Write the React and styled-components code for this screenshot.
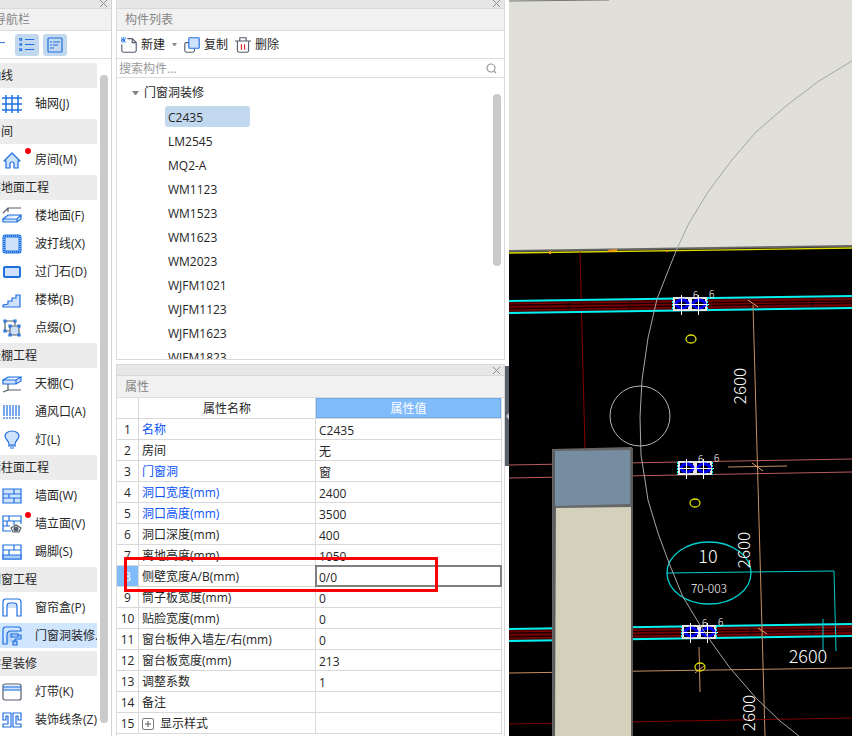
import React from "react";
import styled, { createGlobalStyle, css } from "styled-components";

const GlobalStyle = createGlobalStyle`
  * { box-sizing: border-box; }
  body {
    margin: 0;
    background: #fff;
    color: #262626;
    font: 12px/20px "Open Sans", "Noto Sans CJK SC", sans-serif;
  }
  button, input { font: inherit; color: inherit; padding: 0; border: 0; background: none; }
  button { cursor: pointer; }
  svg { display: block; flex: none; }
`;

const Workspace = styled.div`
  display: flex;
  height: 100vh;
  overflow: hidden;
`;

const NavPanel = styled.nav`
  flex: none;
  display: flex;
  flex-direction: column;
  align-items: stretch;
  width: 127px;
  margin-left: -15px;
  margin-right: 4px;
  border-right: 1px solid #d4d4d4;
  overflow: hidden;
`;

const Dock = styled.div`
  flex: none;
  display: flex;
  flex-direction: column;
  gap: 4px;
  width: 389px;
`;

const Panel = styled.section`
  display: flex;
  flex-direction: column;
  min-height: 0;
  flex: ${(p) => (p.$grow ? "1" : "0 0 360px")};
  border: 1px solid #d9d9d9;
  border-top-width: ${(p) => (p.$grow ? "1px" : "0")};
  border-bottom-width: ${(p) => (p.$grow ? "0" : "1px")};
  overflow: hidden;
`;

const Grip = styled.div`
  flex: none;
  display: flex;
  justify-content: flex-end;
  align-items: flex-end;
  height: ${(p) => (p.$tall ? "11px" : "9px")};
  padding-right: 3px;
  background: #e7e7e7;
  border-bottom: 1px solid #d9d9d9;
`;

const CloseButton = styled.button`
  display: flex;
  padding-bottom: 1px;
`;

const PanelTitle = styled.h2`
  flex: none;
  margin: 0;
  height: 22px;
  padding-left: ${(p) => p.$inset || "8px"};
  background: #f1f1f1;
  border-bottom: 1px solid #dcdcdc;
  color: #858585;
  font-size: 12px;
  font-weight: 400;
  line-height: 22px;
`;

const Toolbar = styled.div`
  flex: none;
  display: flex;
  align-items: center;
  height: 28px;
  padding-left: 4px;
  border-bottom: 1px solid #dcdcdc;
`;

const NavToolbar = styled(Toolbar)`
  gap: 4px;
  padding-left: 6px;
`;

const ToggleButton = styled.button`
  display: grid;
  place-items: center;
  width: ${(p) => (p.$on ? "24px" : "20px")};
  height: 22px;
  border-radius: 3px;
  background: ${(p) => (p.$on ? "#c2d8ef" : "transparent")};
`;

const ToolButton = styled.button`
  display: flex;
  align-items: center;
  gap: 4px;
  margin-right: 7px;
  padding-top: 1px;
  line-height: 20px;
`;

const NavBody = styled.div`
  flex: 1;
  display: flex;
  gap: 3px;
  min-height: 0;
  padding: 4px 3px 0 0;
  overflow: hidden;
`;

const NavList = styled.div`
  flex: 1;
  display: flex;
  flex-direction: column;
  gap: 3px;
  min-width: 0;
`;

const NavGroup = styled.h3`
  flex: none;
  margin: 0;
  height: 25px;
  padding-left: 4px;
  background: #ececec;
  font-size: 12px;
  font-weight: 400;
  line-height: 25px;
  white-space: nowrap;
`;

const NavItem = styled.button`
  flex: none;
  display: flex;
  align-items: center;
  gap: 13px;
  height: 25px;
  padding-left: 17px;
  background: ${(p) => (p.$active ? "#d0e5fe" : "transparent")};
  line-height: 25px;
  white-space: nowrap;
  overflow: hidden;
`;

const IconSlot = styled.span`
  position: relative;
  display: block;
`;

const NewDot = styled.i`
  position: absolute;
  top: -2px;
  right: -9px;
  width: 6px;
  height: 6px;
  border-radius: 50%;
  background: #f5000c;
`;

const ScrollTrack = styled.div`
  flex: none;
  width: 8px;
  margin: ${(p) => p.$margin};
`;

const ScrollThumb = styled.div`
  height: ${(p) => p.$length};
  border-radius: 4px;
  background: #cacaca;
`;

const SearchBar = styled.label`
  flex: none;
  display: flex;
  align-items: center;
  height: 19px;
  padding: 0 7px 0 2px;
  border-bottom: 1px solid #dcdcdc;
`;

const SearchInput = styled.input`
  flex: 1;
  min-width: 0;
  height: 18px;
  padding-top: 2px;
  outline: 0;
  &::placeholder { color: #9a9a9a; opacity: 1; }
`;

const TreeArea = styled.div`
  flex: 1;
  display: flex;
  min-height: 0;
  overflow: hidden;
`;

const Tree = styled.div`
  flex: 1;
  padding: 2px 0 0 15px;
`;

const TreeRow = styled.div`
  display: flex;
  align-items: center;
  height: 24px;
  padding-left: ${(p) => (p.$leaf ? "33px" : "0")};
`;

const TreeToggle = styled.button`
  display: flex;
  align-items: center;
  gap: 5px;
  padding-top: 2px;
`;

const TreeLeaf = styled.button`
  min-width: 85px;
  height: 21px;
  padding: 2px 3px 0;
  border-radius: 3px;
  background: ${(p) => (p.$active ? "#c2d8ef" : "transparent")};
  line-height: 19px;
  text-align: left;
`;

const SheetArea = styled.div`
  position: relative;
  padding-right: 2px;
`;

const Sheet = styled.table`
  width: 100%;
  table-layout: fixed;
  border-collapse: separate;
  border-spacing: 0;
`;

const IndexCol = styled.col`
  width: 22px;
`;

const NameCol = styled.col`
  width: 177px;
`;

const cell = css`
  height: 21px;
  padding: 2px 3px 0;
  border-right: 1px solid #d9d9d9;
  border-bottom: 1px solid #d9d9d9;
  font-weight: 400;
  line-height: 18px;
  white-space: nowrap;
`;

const HeadCell = styled.th`
  ${cell}
  text-align: center;
  ${(p) => p.$active && css`
    background: #80bbfb;
    color: #fff;
    box-shadow: inset 0 0 0 1px #6ba9ec;
  `}
`;

const IndexCell = styled.th`
  ${cell}
  padding: 2px 0 0;
  text-align: center;
  ${(p) => p.$active && css`
    background: #80bbfb;
    color: #fff;
  `}
`;

const NameCell = styled.td`
  ${cell}
  color: ${(p) => (p.$key ? "#0a55f5" : "inherit")};
`;

const ValueCell = styled.td`
  ${cell}
  padding: 0;
`;

const ValueInput = styled.input`
  display: block;
  width: 100%;
  height: 20px;
  padding: 2px 3px 0;
  outline: ${(p) => (p.$active ? "2px solid #7f7f7f" : "0")};
  outline-offset: -1px;
`;

const ExpandRow = styled.div`
  display: flex;
  align-items: center;
  gap: 6px;
`;

const ExpandButton = styled.button`
  display: grid;
  place-items: center;
  width: 12px;
  height: 12px;
  border: 1px solid #7a7a7a;
  border-radius: 2px;
`;

const Highlight = styled.div`
  position: absolute;
  top: 159px;
  left: 7px;
  right: 66px;
  height: 35px;
  border: 3px solid #fb0000;
  pointer-events: none;
`;

const Splitter = styled.div`
  flex: none;
  display: flex;
  flex-direction: column;
  justify-content: center;
  width: 4px;
  padding-top: 96px;
`;

const SplitterHandle = styled.button`
  display: grid;
  place-items: center end;
  height: 100px;
  background: #59606b;
`;

const Viewport = styled.main`
  flex: 1;
  min-width: 0;
  background: #000;
`;

const Drawing = styled.svg`
  width: 100%;
  height: 100%;
`;

const DrawingText = styled.text`
  fill: #fff;
  font-family: "Noto Sans CJK SC", sans-serif;
  font-size: ${(p) => p.$size};
  font-weight: 300;
`;

const LabelText = styled(DrawingText)`
  text-anchor: middle;
`;

const B = "#1f6fe0";
const L = "#cfe2fb";
const G = "#555d6b";

const iconShapes = {
  grid: <path d="M4 1v18M10 1v18M16 1v18M0 4h20M0 10h20M0 16h20" strokeWidth="1.5" />,
  home: <path d="m2 11 8-8 8 8h-2v7h-4v-4q0-2-2-2t-2 2v4H4v-7z" fill={L} strokeLinejoin="round" />,
  floor: <><path d="m1 7 5-5h13M6 2v4" stroke={G} /><path d="m1 13 5-4h13l-4 4zM1 13v3h14l4-3V9M15 13v3" fill={L} /></>,
  border: <><rect x="2" y="2" width="16" height="16" rx="1" fill={L} strokeWidth="3" /><rect x="2" y="2" width="16" height="16" stroke="#a8ccfa" strokeDasharray="1 1" /></>,
  sill: <rect x="2" y="5" width="16" height="10" rx="1" fill={L} strokeWidth="2" />,
  stairs: <path d="M1 15v2h17V5h-4v3h-4v3H6v3z" fill={L} />,
  ornament: <><path d="M3 13V3h10M3 13h4M13 3v4" stroke={G} /><path d="M8 8h9v9H8z" fill={L} stroke={G} /><path d="M2 2h2v2H2zM12 2h2v2h-2zM2 12h2v2H2zM7 7h2v2H7zM16 7h2v2h-2zM7 16h2v2H7zM16 16h2v2h-2z" /></>,
  ceiling: <><path d="m1 6 5-3h13l-5 3zM1 6v4h13l5-3V3M14 6v4" fill={L} /><path d="M6 10v6l-5 2M6 16h13" stroke={G} /></>,
  vent: <path d="M2 3v14M5 3v14M8 3v14M11 3v14M14 3v14M17 3v14" strokeDasharray="11 1" />,
  lamp: <><path d="M7 15q0-3-2-5-2-2-2-4a7 5 0 0 1 14 0q0 2-2 4-2 2-2 5z" fill={L} /><path d="M6 16h8M8 18h4" /></>,
  wall: <path d="M1 3h18v14H1zM1 8h18M1 12h18M12 3v5M7 8v4M12 12v5" fill={L} />,
  facade: <><path d="M9 17H1V2h18v8M1 7h18M1 12h7M7 2v5M12 7v4M5 7v5" /><path d="m9 14 5-3 5 3-2 4h-6z" fill="#fff" stroke={G} /><circle cx="14" cy="15" r="2" fill={G} stroke={G} /></>,
  skirting: <><path d="M1 3h18v14H1zM1 8h18M12 3v5M7 8v5" /><path d="M1 13h18v4H1z" fill="#a9ccf8" /></>,
  curtain: <><path d="M6 10V6h8v4" fill={L} stroke={L} /><path d="M1 18V4q0-3 3-3h12q3 0 3 3v14h-4V8q0-3-3-3H8Q5 5 5 8v10z" /></>,
  opening: <><path d="M5 17V8q0-3 3-3h8v6h-5v5z" fill="#b6d3f8" stroke="none" /><path d="M5 18H1V4q0-3 3-3h12q3 0 3 3v1H9Q5 5 5 9z" /><path d="M9 8h7v3H9zM16 9h3v4h-6v3M11 15h4v4h-4z" fill="#a9ccf8" /></>,
  strip: <><path d="M2 4h16v4H2z" fill={L} stroke={L} /><rect x="1" y="2" width="18" height="16" rx="2" stroke={G} /><path d="M1 5h18M1 8h18" /></>,
  moulding: <path d="M1 3h8v14H1v-3h5V6H4v4H1zM19 3h-8v14h8v-3h-5V6h2v4h3z" />,
  list: <><path d="M7 4h11M7 10h11M7 16h11" /><path d="M1 3h2v2H1zM1 9h2v2H1zM1 15h2v2H1z" /></>,
  detail: <><rect x="3" y="3" width="14" height="14" rx="1" /><path d="M5 7h2M8 7h7M5 10h2M8 10h5M5 13h4" /></>,
  minus: <path d="M0 7h15" />,
  create: <><path d="M1 9v8q0 2 2 2h14q2 0 2-2V7l-5-5H8M14 2v5h5" stroke={G} strokeWidth="1.4" /><path d="m0 1 6 6M6 1 0 7M3 0v8M0 4h6" strokeDasharray="1 1" strokeWidth="2" /></>,
  copy: <><path d="M6 7H3q-2 0-2 2v8q0 2 2 2h8q2 0 2-2v-2" stroke={G} strokeWidth="1.4" /><rect x="6" y="1" width="13" height="13" rx="1" fill={L} strokeWidth="1.4" /></>,
  trash: <><path d="M0 5h20M6 5V1h8v4M3 5v12q0 2 2 2h10q2 0 2-2V5" stroke={G} strokeWidth="1.4" /><path d="M8 9v7M12 9v7" stroke="#e02020" strokeWidth="1.4" /></>,
};

function Icon({ name, size = 20 }) {
  return (
    <svg width={size} height={size} viewBox="0 0 20 20" fill="none" stroke={B} strokeWidth="1.2" aria-hidden="true">
      {iconShapes[name]}
    </svg>
  );
}

function PanelGrip({ tall }) {
  return (
    <Grip $tall={tall}>
      <CloseButton aria-label="关闭">
        <svg width="9" height="7" viewBox="0 0 9 7" stroke="#8f8f8f"><path d="m1 0 7 7M8 0 1 7" /></svg>
      </CloseButton>
    </Grip>
  );
}

const navigation = [
  ["轴线", [["grid", "轴网(J)"]]],
  ["房间", [["home", "房间(M)", "new"]]],
  ["楼地面工程", [["floor", "楼地面(F)"], ["border", "波打线(X)"], ["sill", "过门石(D)"], ["stairs", "楼梯(B)"], ["ornament", "点缀(O)"]]],
  ["天棚工程", [["ceiling", "天棚(C)"], ["vent", "通风口(A)"], ["lamp", "灯(L)"]]],
  ["墙柱面工程", [["wall", "墙面(W)"], ["facade", "墙立面(V)", "new"], ["skirting", "踢脚(S)"]]],
  ["门窗工程", [["curtain", "窗帘盒(P)"], ["opening", "门窗洞装修.", "active"]]],
  ["零星装修", [["strip", "灯带(K)"], ["moulding", "装饰线条(Z)"]]],
];

const components = ["C2435", "LM2545", "MQ2-A", "WM1123", "WM1523", "WM1623", "WM2023", "WJFM1021", "WJFM1123", "WJFM1623", "WJFM1823"];

const properties = [
  ["名称", "C2435", true],
  ["房间", "无"],
  ["门窗洞", "窗", true],
  ["洞口宽度(mm)", "2400", true],
  ["洞口高度(mm)", "3500", true],
  ["洞口深度(mm)", "400"],
  ["离地高度(mm)", "1050"],
  ["侧壁宽度A/B(mm)", "0/0"],
  ["筒子板宽度(mm)", "0"],
  ["贴脸宽度(mm)", "0"],
  ["窗台板伸入墙左/右(mm)", "0"],
  ["窗台板宽度(mm)", "213"],
  ["调整系数", "1"],
  ["备注", ""],
  ["显示样式", ""],
];

function Navigation() {
  return (
    <NavPanel>
      <PanelGrip />
      <PanelTitle $inset="9px">导航栏</PanelTitle>
      <NavToolbar>
        <ToggleButton aria-label="折叠"><Icon name="minus" size={16} /></ToggleButton>
        <ToggleButton $on aria-label="列表"><Icon name="list" size={17} /></ToggleButton>
        <ToggleButton $on aria-label="详情"><Icon name="detail" size={20} /></ToggleButton>
      </NavToolbar>
      <NavBody>
        <NavList>
          {navigation.map(([title, items]) => (
            <React.Fragment key={title}>
              <NavGroup>{title}</NavGroup>
              {items.map(([icon, label, state]) => (
                <NavItem key={label} $active={state === "active"}>
                  <IconSlot>
                    <Icon name={icon} />
                    {state === "new" && <NewDot />}
                  </IconSlot>
                  {label}
                </NavItem>
              ))}
            </React.Fragment>
          ))}
        </NavList>
        <ScrollTrack $margin="12px 0 13px"><ScrollThumb $length="100%" /></ScrollTrack>
      </NavBody>
    </NavPanel>
  );
}

function ComponentList() {
  return (
    <Panel>
      <PanelGrip />
      <PanelTitle>构件列表</PanelTitle>
      <Toolbar>
        <ToolButton>
          <Icon name="create" size={16} />新建
          <svg width="8" height="4" viewBox="0 0 8 4" fill="#8a8a8a"><path d="M3 0h5L6 3H5z" /></svg>
        </ToolButton>
        <ToolButton><Icon name="copy" size={16} />复制</ToolButton>
        <ToolButton><Icon name="trash" size={16} />删除</ToolButton>
      </Toolbar>
      <SearchBar>
        <SearchInput aria-label="搜索构件" placeholder="搜索构件..." />
        <svg width="11" height="11" viewBox="0 0 11 11" fill="none" stroke="#999" strokeWidth="1.2">
          <circle cx="5" cy="5" r="4" /><path d="m8 8 2 2" />
        </svg>
      </SearchBar>
      <TreeArea>
        <Tree>
          <TreeRow>
            <TreeToggle aria-expanded="true">
              <svg width="7" height="4" viewBox="0 0 7 4" fill="#858585"><path d="M0 0h7L4 4H3z" /></svg>
              门窗洞装修
            </TreeToggle>
          </TreeRow>
          {components.map((name, i) => (
            <TreeRow key={name} $leaf><TreeLeaf $active={i === 0}>{name}</TreeLeaf></TreeRow>
          ))}
        </Tree>
        <ScrollTrack $margin="16px 3px 0 0"><ScrollThumb $length="172px" /></ScrollTrack>
      </TreeArea>
    </Panel>
  );
}

function Properties() {
  return (
    <Panel $grow>
      <PanelGrip tall />
      <PanelTitle>属性</PanelTitle>
      <SheetArea>
        <Sheet>
          <colgroup><IndexCol /><NameCol /><col /></colgroup>
          <thead>
            <tr>
              <HeadCell aria-label="序号" />
              <HeadCell scope="col">属性名称</HeadCell>
              <HeadCell scope="col" $active>属性值</HeadCell>
            </tr>
          </thead>
          <tbody>
            {properties.map(([name, value, key], i) => (
              <tr key={name}>
                <IndexCell scope="row" $active={i === 7}>{i + 1}</IndexCell>
                <NameCell $key={key}>
                  {i === 14 ? (
                    <ExpandRow>
                      <ExpandButton aria-label="展开显示样式">
                        <svg width="6" height="6" viewBox="0 0 6 6" stroke="#555"><path d="M3 0v6M0 3h6" /></svg>
                      </ExpandButton>
                      {name}
                    </ExpandRow>
                  ) : name}
                </NameCell>
                <ValueCell><ValueInput aria-label={name} defaultValue={value} $active={i === 7} /></ValueCell>
              </tr>
            ))}
          </tbody>
        </Sheet>
        <Highlight />
      </SheetArea>
    </Panel>
  );
}

function WindowPair({ x, y }) {
  return (
    <g transform={`translate(${x} ${y})`} fill="none">
      {[2, 19].map((dx) => (
        <g key={dx} transform={`translate(${dx} 0)`}>
          <rect width="15" height="12" fill="#000" stroke="#e6e6e6" strokeWidth="2" />
          <ellipse cx="8" cy="6" rx="6" ry="4" stroke="#0000f5" strokeWidth="3" />
          <path d="M7.5-3v20M-1 6.5h19" stroke="#fff" />
        </g>
      ))}
      <path d="M.5 0v13M35.5 0v13" stroke="#0ff" strokeDasharray="2 1" />
      <DrawingText x="21" y="1" $size="10px">6</DrawingText>
      <DrawingText x="37" y="0" $size="10px">6</DrawingText>
    </g>
  );
}

function Wall({ y }) {
  return (
    <g transform={`translate(509 ${y})`}>
      <path d="M0 5 343 0v12L0 17z" fill="#4a0000" />
      <path d="m0 8 343-5M0 11l343-5M0 14l343-5" stroke="#860000" strokeDasharray="58 3" />
      <path d="m0 9 343-4M0 13l343-6" stroke="#170000" />
      <path d="m0 5 343-5M0 17l343-5" stroke="#00f2f2" strokeWidth="2" />
    </g>
  );
}

function Dimension({ x, y }) {
  return <LabelText $size="17px" transform={`translate(${x} ${y}) rotate(-90)`}>2600</LabelText>;
}

function ModelView() {
  return (
    <Viewport>
      <Drawing viewBox="509 0 343 736" preserveAspectRatio="xMinYMin slice" role="img" aria-label="模型视图" fill="none">
        <path d="M509 0h343v246l-343 5z" fill="#e0e0d8" />
        <path d="m509 251 343-5" stroke="#666" strokeWidth="2" />
        <path d="m509 253 343-5" stroke="#dede00" strokeWidth="1.3" />
        <path d="m509 1 100-1" stroke="#777" />
        <path d="M550 251v3M608 251l9-1M667 250v2" stroke="#f09016" strokeWidth="2" />
        <path d="m580 252 5 197" stroke="#850000" />
        <Wall y="296" />
        <g stroke="#ba5c5c">
          <path d="m509 465 343-6M509 478l343-6" />
        </g>
        <Wall y="624" />
        <path d="m509 673 343-5M753 305l5 180 7 251M699 647l1 45M728 467l59-1" stroke="#c58f60" />
        <path d="m748 300 10 7M752 463l11 8M758 628l9 6M695 673l9-7" stroke="#eaa267" />
        <path d="m509 724 343-6" stroke="#7c0000" />
        <g stroke="#dfdf00" strokeWidth="1.3">
          <ellipse cx="691" cy="339" rx="5" ry="4" />
          <ellipse cx="695" cy="503" rx="5" ry="4" />
          <ellipse cx="700" cy="667" rx="5" ry="4" />
        </g>
        <WindowPair x="672" y="298" />
        <WindowPair x="677" y="462" />
        <WindowPair x="681" y="626" />
        <g stroke="#00cfcf">
          <ellipse cx="709" cy="573" rx="42" ry="31" strokeWidth="1.3" />
          <path d="m667 573 167-2 2 80M823 619v31" />
        </g>
        <path d="m852 61-33 20-33 25-30 26-25 29-23 31-19 31-13 28-19 48-9 39-6 42-2 37 1 38 4 25 3 20 10 33 11 30 14 34 17 28 12 18 18 25 26 30 24 23 19 15" stroke="#a5a5a5" />
        <circle cx="640" cy="416" r="30" stroke="#b8b8b8" />
        <Dimension x="746" y="386" />
        <Dimension x="750" y="550" />
        <Dimension x="755" y="713" />
        <LabelText x="708" y="563" $size="18px">10</LabelText>
        <LabelText x="709" y="593" $size="12px">70-003</LabelText>
        <LabelText x="808" y="663" $size="18px">2600</LabelText>
        <path d="m552 449 80-2v289h-80z" fill="#666" />
        <path d="m555 451 75-1v54l-75 2z" fill="#768da1" />
        <path d="m556 508 75-1v229h-76z" fill="#d3d0bb" />
        <path d="M554 450v286M632 448v288" stroke="#5c5c5c" strokeWidth="2" />
      </Drawing>
    </Viewport>
  );
}

export default function App() {
  return (
    <>
      <GlobalStyle />
      <Workspace>
        <Navigation />
        <Dock>
          <ComponentList />
          <Properties />
        </Dock>
        <Splitter>
          <SplitterHandle aria-label="折叠面板">
            <svg width="3" height="7" viewBox="0 0 3 7" fill="#c4c8cd"><path d="M3 0v7L0 3z" /></svg>
          </SplitterHandle>
        </Splitter>
        <ModelView />
      </Workspace>
    </>
  );
}
